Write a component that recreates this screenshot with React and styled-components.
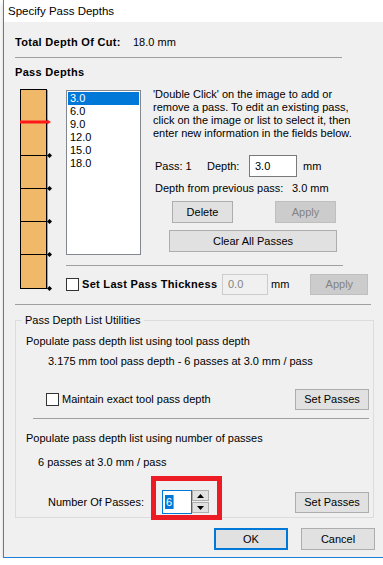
import React from 'react';
import styled, { createGlobalStyle } from 'styled-components';

const GlobalStyle = createGlobalStyle`
    html, body {
        margin: 0;
        padding: 0;
        background: #ffffff;
    }

    body {
        font-family: "Liberation Sans", Arial, sans-serif;
        font-size: 11px;
        color: #000;
        overflow: hidden;
    }
`;

const Window = styled.div`
    margin-left: 3px;
    width: 380px;
    border-left: 1px solid #3a84cc;
    border-bottom: 1px solid #1a7fd6;
    box-shadow: 0 3px 6px rgba(0, 0, 0, 0.18);
`;

const TitleBar = styled.div`
    height: 22px;
    background: #ffffff;
    display: flex;
    align-items: center;
    padding-left: 4px;
    font-size: 11.5px;
    color: #000;
`;

const Body = styled.div`
    background: #f0f0f0;
    padding: 13px 0 7px 11px;
    display: flex;
    flex-direction: column;
`;

const Row = styled.div`
    display: flex;
    align-items: center;
    height: ${p => p.$h || 13}px;
    margin-top: ${p => p.$mt || 0}px;
    padding-left: ${p => p.$pl || 0}px;
    line-height: 13px;
    white-space: nowrap;
`;

const Bold = styled.span`
    font-weight: bold;
    letter-spacing: 0.3px;
    width: ${p => (p.$w ? `${p.$w}px` : 'auto')};
`;

const Label = styled.span`
    width: ${p => (p.$w ? `${p.$w}px` : 'auto')};
    flex-shrink: 0;
`;

const Rule = styled.div`
    height: 1px;
    background: #a0a0a0;
    width: ${p => p.$w}px;
    margin-top: ${p => p.$mt || 0}px;
    margin-left: ${p => p.$ml || 0}px;
`;

const Main = styled.div`
    display: flex;
    margin-top: 9px;
`;

const Graphic = styled.svg`
    display: block;
    margin-left: 4px;
    flex-shrink: 0;
`;

const RightPart = styled.div`
    display: flex;
    flex-direction: column;
    margin-left: 13px;
`;

const TopRow = styled.div`
    display: flex;
`;

const ListBox = styled.ul`
    list-style: none;
    margin: 2px 0 0;
    padding: 1px;
    width: 71px;
    height: 161px;
    background: #fff;
    border: 1px solid #828790;
    flex-shrink: 0;
`;

const ListItem = styled.li`
    height: 13px;
    line-height: 13px;
    padding-left: 2px;
    background: ${p => (p.$selected ? '#0078d7' : 'transparent')};
    color: ${p => (p.$selected ? '#fff' : '#000')};
`;

const Info = styled.div`
    display: flex;
    flex-direction: column;
    margin-left: 12px;
`;

const Para = styled.p`
    margin: 0;
    line-height: 13px;
    white-space: nowrap;
`;

const TextBox = styled.div`
    box-sizing: border-box;
    width: ${p => p.$w}px;
    height: ${p => p.$h || 22}px;
    background: ${p => (p.$disabled ? '#f0f0f0' : '#fff')};
    border: 1px solid ${p => (p.$disabled ? '#cccccc' : '#7a7a7a')};
    color: ${p => (p.$disabled ? '#838383' : '#000')};
    display: flex;
    align-items: center;
    padding-left: 5px;
    flex-shrink: 0;
`;

const Button = styled.div`
    box-sizing: border-box;
    width: ${p => p.$w || 74}px;
    height: ${p => p.$h || 21}px;
    display: flex;
    align-items: center;
    justify-content: center;
    background: ${p => (p.$disabled ? '#cccccc' : '#e1e1e1')};
    border: ${p => (p.$default ? '2px solid #0078d7' : `1px solid ${p.$disabled ? '#bfbfbf' : '#adadad'}`)};
    color: ${p => (p.$disabled ? '#838383' : '#000')};
    margin-left: ${p => p.$ml || 0}px;
    flex-shrink: 0;
`;

const ButtonRow = styled.div`
    display: flex;
    margin-top: ${p => p.$mt || 0}px;
    padding-left: ${p => p.$pl || 0}px;
`;

const Check = styled.span`
    box-sizing: border-box;
    width: 13px;
    height: 13px;
    border: 1px solid #333;
    background: #fff;
    margin-right: 3px;
    flex-shrink: 0;
`;

const Group = styled.fieldset`
    margin: 8px 0 0;
    padding: 0 5px 3px 10px;
    width: 359px;
    box-sizing: border-box;
    border: 1px solid #dcdcdc;
    min-width: 0;
`;

const Legend = styled.legend`
    margin-left: -4px;
    padding: 0 3px;
    line-height: 14px;
`;

const Spin = styled.div`
    position: relative;
    display: flex;
`;

const SpinText = styled.div`
    box-sizing: border-box;
    width: 30px;
    height: 24px;
    border: 1px solid #0078d7;
    background: #fff;
    display: flex;
    align-items: center;
    padding-left: 2px;
`;

const Sel = styled.span`
    background: #0078d7;
    color: #fff;
    padding: 0 1px;
    line-height: 14px;
    border-right: 1px solid #f28c1b;
`;

const SpinButtons = styled.div`
    display: flex;
    flex-direction: column;
    gap: 1px;
`;

const SpinBtn = styled.div`
    box-sizing: border-box;
    width: 17px;
    height: 11px;
    background: #e1e1e1;
    border: 1px solid #adadad;
    display: flex;
    align-items: center;
    justify-content: center;
`;

const Highlight = styled.div`
    position: absolute;
    left: -11px;
    top: -14px;
    width: 71px;
    height: 44px;
    box-sizing: border-box;
    border: 5px solid #ed1c24;
    pointer-events: none;
`;

const Footer = styled.div`
    display: flex;
    justify-content: flex-end;
    margin-top: 10px;
    padding-right: 9px;
`;

const passes = ['3.0', '6.0', '9.0', '12.0', '15.0', '18.0'];

function DepthGraphic() {
    const marks = [34, 67, 100, 133, 166, 200];
    return (
        <Graphic width="34" height="203" viewBox="0 0 34 203">
            <rect x="1.5" y="1.5" width="26" height="199" fill="#f0b96a" stroke="#000" strokeWidth="1" />
            <line x1="28.5" y1="2" x2="28.5" y2="201" stroke="#a0a0a0" strokeWidth="1" />
            {marks.map((y, i) =>
                i === 0 ? (
                    <g key={y}>
                        <rect x="1" y={y - 1.5} width="28" height="3" fill="#ff1a1a" />
                        <polygon points={`28,${y - 2.5} 32,${y} 28,${y + 2.5}`} fill="#ff1a1a" />
                    </g>
                ) : (
                    <g key={y}>
                        <line x1="1" y1={y + 0.5} x2="28" y2={y + 0.5} stroke="#000" strokeWidth="1" />
                        <polygon points={`30.5,${y - 2} 33,${y + 0.5} 30.5,${y + 3} 28,${y + 0.5}`} fill="#000" />
                    </g>
                )
            )}
        </Graphic>
    );
}

function Arrow({ up }) {
    return (
        <svg width="7" height="4" viewBox="0 0 7 4">
            <polygon points={up ? '0,4 3.5,0 7,4' : '0,0 3.5,4 7,0'} fill="#000" />
        </svg>
    );
}

export default function App() {
    return (
        <>
            <GlobalStyle />
            <Window>
                <TitleBar>Specify Pass Depths</TitleBar>
                <Body>
                    <Row $h={14}>
                        <Bold $w={118}>Total Depth Of Cut:</Bold>
                        <Label>18.0 mm</Label>
                    </Row>
                    <Rule $w={327} $mt={8} />
                    <Row $h={14} $mt={7}>
                        <Bold>Pass Depths</Bold>
                    </Row>

                    <Main>
                        <DepthGraphic />
                        <RightPart>
                            <TopRow>
                                <ListBox>
                                    {passes.map((p, i) => (
                                        <ListItem key={p} $selected={i === 0}>{p}</ListItem>
                                    ))}
                                </ListBox>
                                <Info>
                                    <Para>'Double Click' on the image to add or</Para>
                                    <Para>remove a pass. To edit an existing pass,</Para>
                                    <Para>click on the image or list to select it, then</Para>
                                    <Para>enter new information in the fields below.</Para>

                                    <Row $h={22} $mt={15} $pl={2}>
                                        <Label $w={52}>Pass: 1</Label>
                                        <Label $w={42}>Depth:</Label>
                                        <TextBox $w={48}>3.0</TextBox>
                                        <Label style={{ marginLeft: 6 }}>mm</Label>
                                    </Row>
                                    <Row $mt={5} $pl={2}>
                                        <Label $w={137}>Depth from previous pass:</Label>
                                        <Label>3.0 mm</Label>
                                    </Row>
                                    <ButtonRow $mt={6} $pl={19}>
                                        <Button $w={61} $h={22}>Delete</Button>
                                        <Button $w={61} $h={22} $ml={42} $disabled>Apply</Button>
                                    </ButtonRow>
                                    <ButtonRow $mt={7} $pl={16}>
                                        <Button $w={168} $h={22}>Clear All Passes</Button>
                                    </ButtonRow>
                                </Info>
                            </TopRow>
                            <Rule $w={277} $mt={10} />
                            <Row $h={21} $mt={8}>
                                <Check />
                                <Bold $w={140}>Set Last Pass Thickness</Bold>
                                <TextBox $w={46} $h={21} $disabled>0.0</TextBox>
                                <Label style={{ marginLeft: 3 }}>mm</Label>
                                <Button $w={58} $ml={21} $disabled>Apply</Button>
                            </Row>
                        </RightPart>
                    </Main>

                    <Rule $w={356} $mt={9} />

                    <Group>
                        <Legend>Pass Depth List Utilities</Legend>
                        <Row $mt={8}>Populate pass depth list using tool pass depth</Row>
                        <Row $mt={7} $pl={22}>3.175 mm tool pass depth - 6 passes at 3.0 mm / pass</Row>
                        <Row $h={21} $mt={21} $pl={20}>
                            <Check />
                            <Label $w={233}>Maintain exact tool pass depth</Label>
                            <Button>Set Passes</Button>
                        </Row>
                        <Rule $w={336} $mt={8} $ml={7} />
                        <Row $mt={13}>Populate pass depth list using number of passes</Row>
                        <Row $mt={11} $pl={12}>6 passes at 3.0 mm / pass</Row>
                        <Row $h={24} $mt={21} $pl={22}>
                            <Label $w={114}>Number Of Passes:</Label>
                            <Spin>
                                <SpinText><Sel>6</Sel></SpinText>
                                <SpinButtons>
                                    <SpinBtn><Arrow up /></SpinBtn>
                                    <SpinBtn><Arrow /></SpinBtn>
                                </SpinButtons>
                                <Highlight />
                            </Spin>
                            <Button $ml={86}>Set Passes</Button>
                        </Row>
                    </Group>

                    <Footer>
                        <Button $default $h={22}>OK</Button>
                        <Button $h={22} $ml={13}>Cancel</Button>
                    </Footer>
                </Body>
            </Window>
        </>
    );
}
